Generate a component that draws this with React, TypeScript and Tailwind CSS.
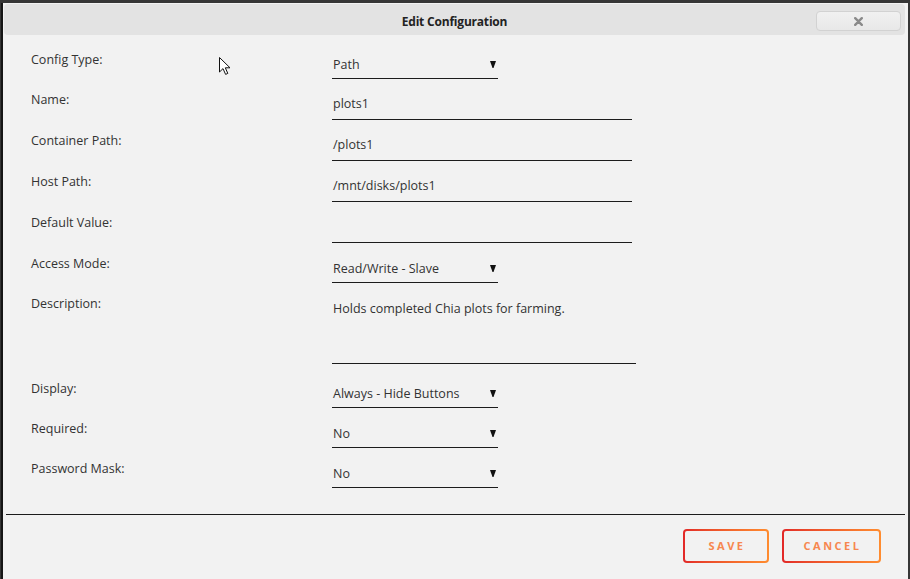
import React from "react";

type Field = {
  label: string;
  value: string;
  kind: "select" | "input" | "textarea";
  row: string;
};

const fields: Field[] = [
  { label: "Config Type:", value: "Path", kind: "select", row: "h-[40px]" },
  { label: "Name:", value: "plots1", kind: "input", row: "h-[41px]" },
  { label: "Container Path:", value: "/plots1", kind: "input", row: "h-[41px]" },
  { label: "Host Path:", value: "/mnt/disks/plots1", kind: "input", row: "h-[41px]" },
  { label: "Default Value:", value: "", kind: "input", row: "h-[41px]" },
  { label: "Access Mode:", value: "Read/Write - Slave", kind: "select", row: "h-[40px]" },
  { label: "Description:", value: "Holds completed Chia plots for farming.", kind: "textarea", row: "h-[85px]" },
  { label: "Display:", value: "Always - Hide Buttons", kind: "select", row: "h-[40px]" },
  { label: "Required:", value: "No", kind: "select", row: "h-[40px]" },
  { label: "Password Mask:", value: "No", kind: "select", row: "h-[56px]" },
];

function Caret() {
  return (
    <svg width="6" height="7" viewBox="0 0 6 7" className="shrink-0">
      <polygon points="0,0 6,0 3.5,7 2.5,7" fill="#111" />
    </svg>
  );
}

function Control({ f }: { f: Field }) {
  if (f.kind === "select") {
    return (
      <div className="w-[166px] h-[30px] pt-[6px] border-b border-[#1c1c1c] flex items-start justify-between pl-[1px] pr-[2px]">
        <span className="leading-5">{f.value}</span>
        <span className="pt-[6px]">
          <Caret />
        </span>
      </div>
    );
  }
  if (f.kind === "textarea") {
    return (
      <div className="w-[304px] h-[71px] pt-[6px] border-b border-[#1c1c1c] pl-[1px]">
        <span className="leading-5">{f.value}</span>
      </div>
    );
  }
  return (
    <div className="w-[300px] h-[31px] pt-[5px] border-b border-[#1c1c1c] pl-[1px]">
      <span className="leading-5">{f.value}</span>
    </div>
  );
}

function GradientButton({ label, width }: { label: string; width: string }) {
  return (
    <div className={`${width} h-[34px] rounded-[4px] p-[2px] bg-gradient-to-r from-[#e22828] to-[#ff8c2f]`}>
      <div className="w-full h-full rounded-[2px] bg-[#f2f2f2] flex items-center justify-center">
        <span className="text-[11px] font-bold tracking-[2.5px] text-[#f7874f] pl-[2px]">{label}</span>
      </div>
    </div>
  );
}

function Pointer() {
  return (
    <svg width="13" height="20" viewBox="0 0 13 20" className="absolute left-[215px] top-[53px]">
      <path
        d="M1.5 1.5 L1.5 16 L5 12.6 L7.6 18.4 L9.8 17.4 L7.3 11.8 L12 11.8 Z"
        fill="#fff"
        stroke="#111"
        strokeWidth="1"
        strokeLinejoin="miter"
      />
    </svg>
  );
}

export default function App() {
  return (
    <div className="w-[910px] h-[579px] bg-[#363636] pl-[1px] pr-[2px] pt-[3px] overflow-hidden" style={{ fontFamily: '"Open Sans", "Noto Sans", sans-serif' }}>
      <div className="relative h-full bg-[#f2f2f2] border-l-2 border-[#161616] flex flex-col text-[12.5px] text-[#333]">
        {/* Title bar */}
        <div className="ml-[1px] mr-[3px] mt-[1px] h-[31px] rounded-[4px] bg-[#e3e3e3] grid grid-cols-[1fr_auto_1fr]">
          <div />
          <div className="flex items-center pt-[4px] font-bold text-[12px] text-[#222] tracking-[-0.2px]">Edit Configuration</div>
          <div className="flex justify-end items-start pt-[7px] pr-[4px]">
            <button className="w-[85px] h-[20px] rounded-[4px] border border-[#d2d2d2] bg-gradient-to-b from-[#f1f1f1] to-[#e8e8e8] flex items-center justify-center">
              <svg width="9" height="9" viewBox="0 0 9 9">
                <path d="M1.2 1.2 L7.8 7.8 M7.8 1.2 L1.2 7.8" stroke="#8a8a8a" strokeWidth="2.4" strokeLinecap="round" />
              </svg>
            </button>
          </div>
        </div>

        {/* Fields */}
        <div className="pt-[14px] pl-[28px]">
          {fields.map((f) => (
            <div key={f.label} className={`${f.row} flex items-start`}>
              <div className="w-[301px] leading-5 pt-[1px]">{f.label}</div>
              <Control f={f} />
            </div>
          ))}
        </div>

        {/* Footer */}
        <div className="mx-[3px] border-t border-[#1c1c1c]" />
        <div className="flex justify-end gap-[13px] pt-[14px] pr-[27px]">
          <GradientButton label="SAVE" width="w-[86px]" />
          <GradientButton label="CANCEL" width="w-[99px]" />
        </div>

        <Pointer />
      </div>
    </div>
  );
}
